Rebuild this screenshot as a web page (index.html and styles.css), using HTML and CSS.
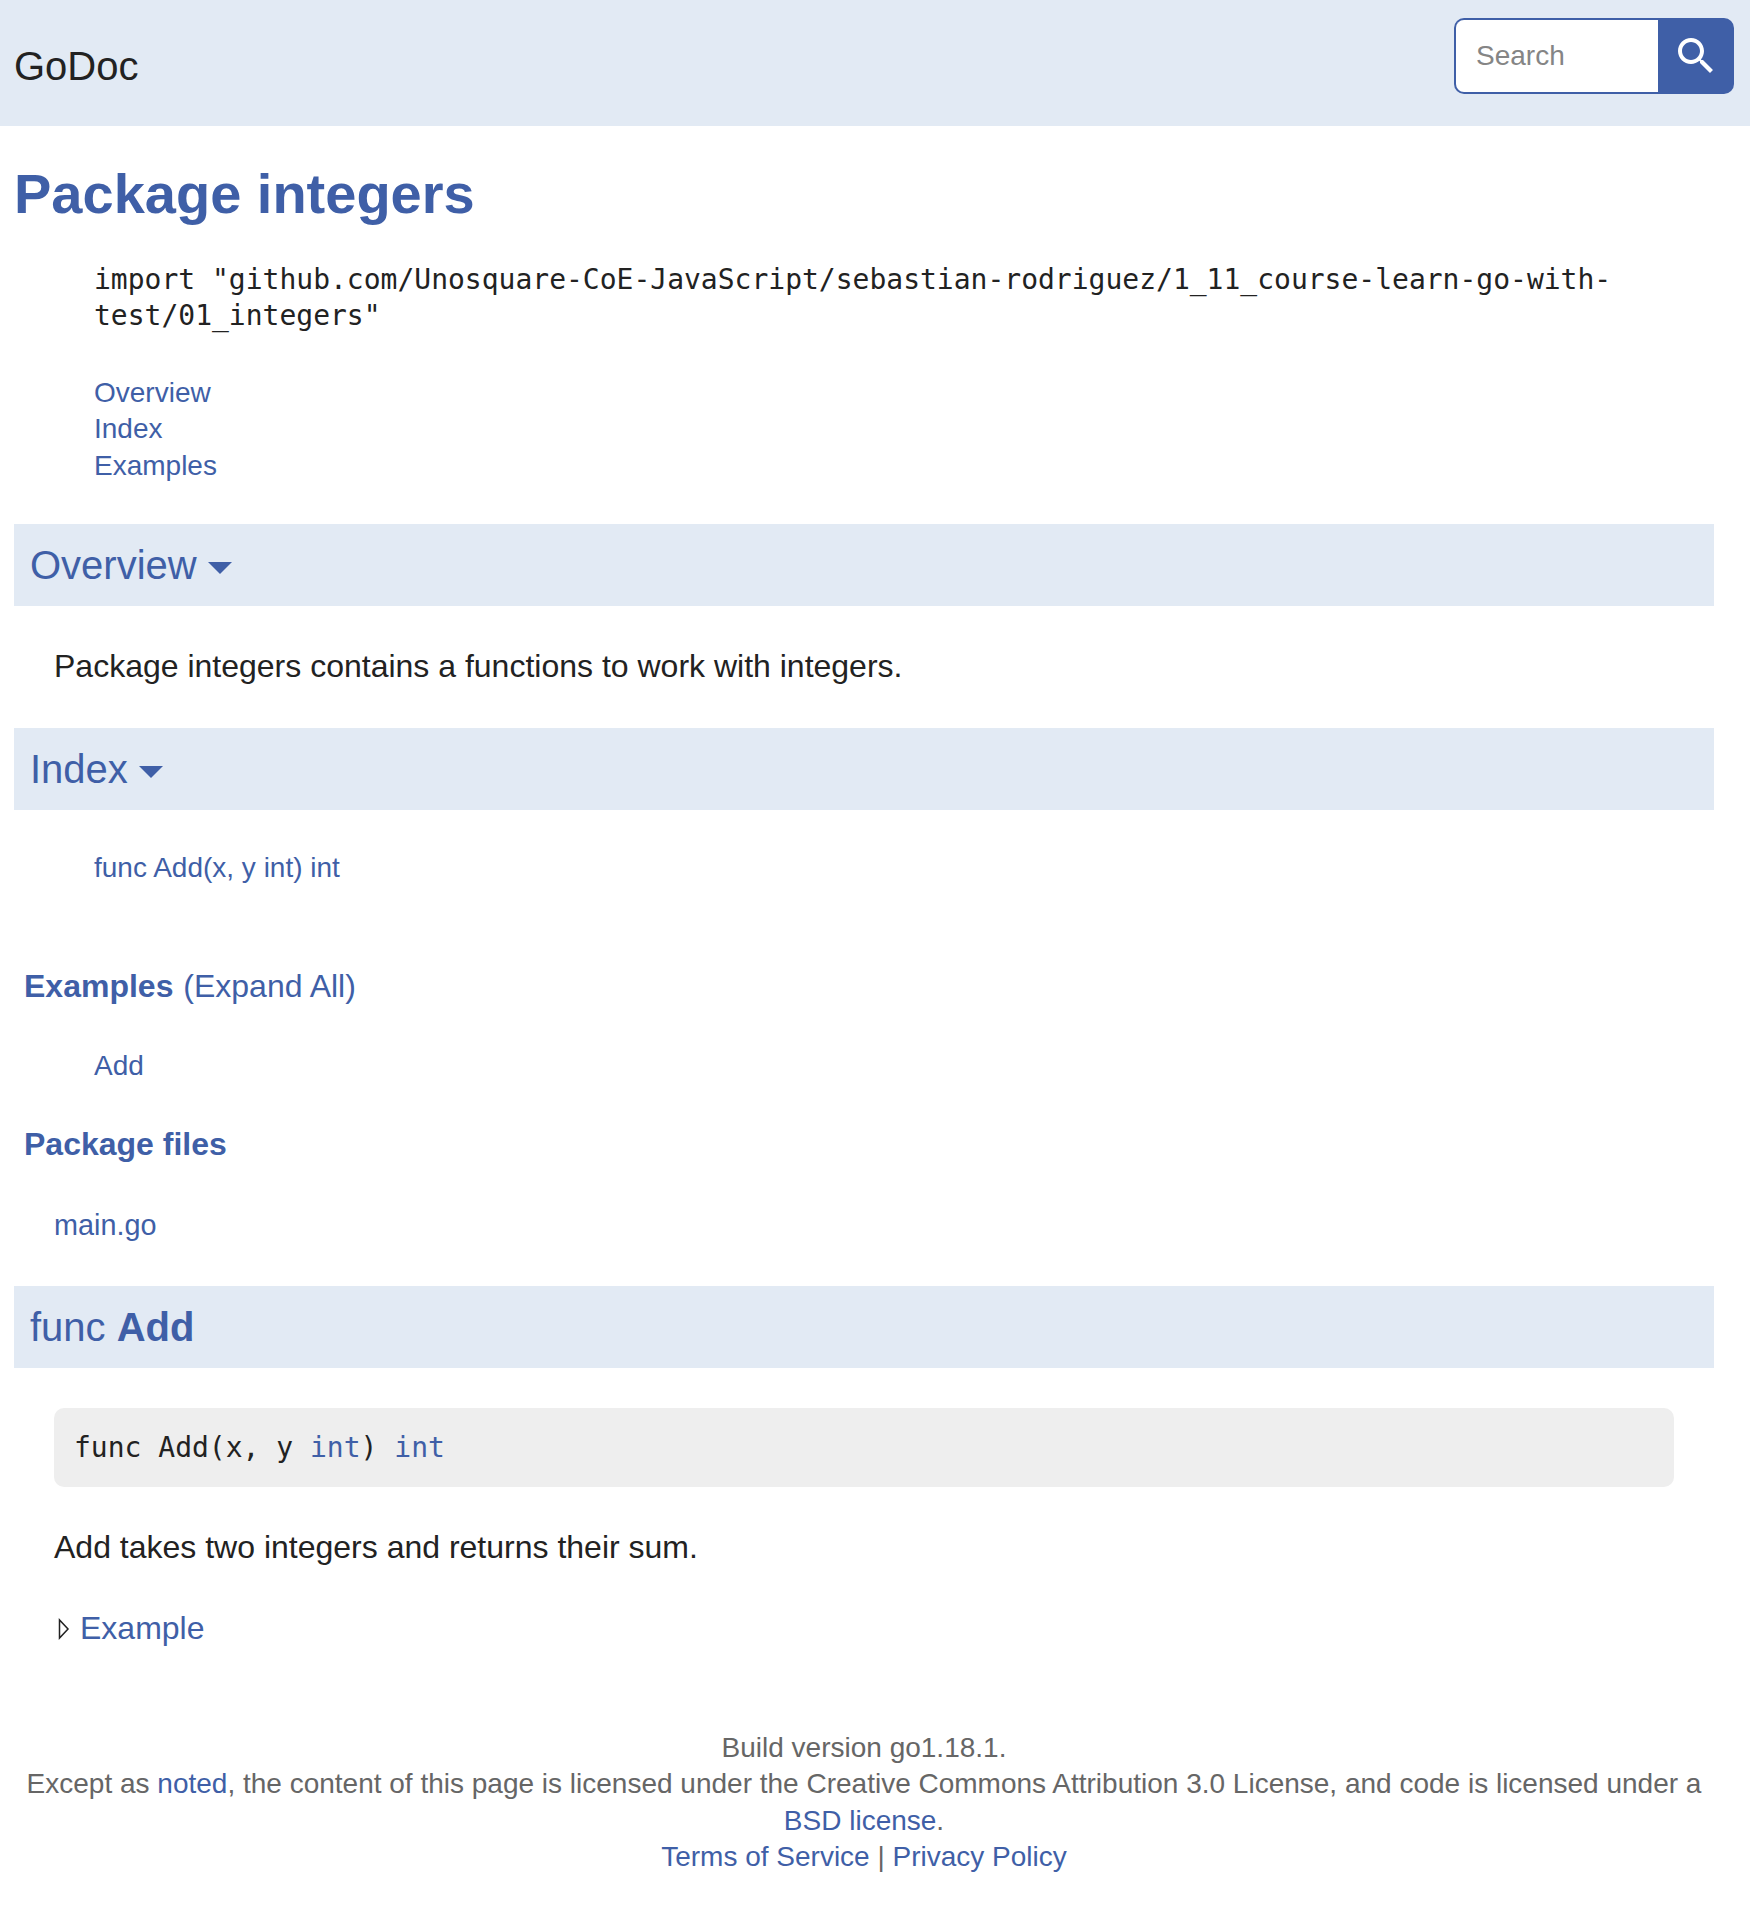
FILE: index.html
```html
<!DOCTYPE html>
<html lang="en">
<head>
<meta charset="utf-8">
<title>integers - GoDoc</title>
<link rel="stylesheet" href="styles.css">
</head>
<body>
<header class="topbar">
  <a class="brand" href="#">GoDoc</a>
  <form class="search">
    <input class="search-input" type="text" placeholder="Search" aria-label="Search">
    <button class="search-button" type="button" aria-label="Submit search">
      <svg class="search-icon" viewBox="0 0 24 24"><path d="M15.5 14h-.79l-.28-.27C15.41 12.59 16 11.11 16 9.5 16 5.91 13.09 3 9.5 3S3 5.91 3 9.5 5.91 16 9.5 16c1.61 0 3.09-.59 4.23-1.57l.27.28v.79l5 4.99L20.49 19l-4.99-5zm-6 0C7.01 14 5 11.99 5 9.5S7.01 5 9.5 5 14 7.01 14 9.5 11.99 14 9.5 14z"/></svg>
    </button>
  </form>
</header>
<main class="page">
  <h1 class="title">Package integers</h1>
  <p class="import"><code>import "github.com/Unosquare-CoE-JavaScript/sebastian-rodriguez/1_11_course-learn-go-with-test/01_integers"</code></p>
  <nav class="toc">
    <a href="#overview">Overview</a>
    <a href="#index">Index</a>
    <a href="#examples">Examples</a>
  </nav>

  <h2 class="bar" id="overview">Overview <svg class="caret" viewBox="0 0 24 12"><path d="M0 0h24L12 12z"/></svg></h2>
  <p class="text overview-text">Package integers contains a functions to work with integers.</p>

  <h2 class="bar" id="index">Index <svg class="caret" viewBox="0 0 24 12"><path d="M0 0h24L12 12z"/></svg></h2>
  <p class="entry index-entry"><a href="#Add">func Add(x, y int) int</a></p>
  <h3 class="sub" id="examples">Examples <a class="expand" href="#">(Expand All)</a></h3>
  <p class="entry example-entry"><a href="#example_Add">Add</a></p>
  <h3 class="sub">Package files</h3>
  <p class="files"><a href="#">main.go</a></p>

  <h2 class="bar" id="Add">func <a class="func-name" href="#">Add</a></h2>
  <pre class="code">func Add(x, y <a href="#">int</a>) <a href="#">int</a></pre>
  <p class="text func-text">Add takes two integers and returns their sum.</p>
  <p class="text example-toggle" id="example_Add"><svg class="arrow" viewBox="0 0 12 22"><path d="M1.5 2v18L10 11z"/></svg><a href="#">Example</a></p>

  <footer class="footer">
    Build version go1.18.1.<br>
    Except as <a href="#">noted</a>, the content of this page is licensed under the Creative Commons Attribution 3.0 License, and code is licensed under a <a href="#">BSD license</a>.<br>
    <a href="#">Terms of Service</a> | <a href="#">Privacy Policy</a>
  </footer>
</main>
</body>
</html>
```
FILE: styles.css
```css
* {
  box-sizing: border-box;
}

body {
  margin: 0;
  background: #fff;
  color: #222;
  font-family: "Liberation Sans", Arial, sans-serif;
  font-size: 32px;
  line-height: 41.6px;
}

h1, h2, h3, p, pre {
  margin: 0;
}

a {
  color: #3f5fa7;
  text-decoration: none;
}

.topbar {
  display: flex;
  justify-content: space-between;
  height: 126px;
  padding: 18px 16px 0 14px;
  background: #e2eaf4;
}

.brand {
  margin-top: 22px;
  color: #222;
  font-size: 40px;
  line-height: 52px;
}

.search {
  display: flex;
  width: 280px;
  height: 76px;
}

.search-input {
  width: 204px;
  margin: 0;
  padding: 0 0 1px 20px;
  border: 2px solid #3f5fa7;
  border-right: 0;
  border-radius: 10px 0 0 10px;
  background: #fff;
  font: 28px "Liberation Sans", Arial, sans-serif;
}

.search-input::placeholder {
  color: #858585;
}

.search-button {
  display: flex;
  align-items: center;
  justify-content: center;
  width: 76px;
  padding: 0;
  border: 0;
  border-radius: 0 10px 10px 0;
  background: #3f5fa7;
}

.search-icon {
  width: 48px;
  height: 48px;
  fill: #fff;
}

.page {
  padding: 33px 36px 0 14px;
}

.title {
  color: #3f5fa7;
  font-size: 56px;
  line-height: 70px;
}

.import {
  margin: 33px 80px 0;
  font-size: 28px;
  line-height: 36.4px;
}

.import code,
.code {
  font-family: "DejaVu Sans Mono", Menlo, monospace;
  font-size: 28px;
  line-height: 36.4px;
}

.import code {
  display: block;
}

.toc {
  display: flex;
  flex-direction: column;
  margin: 40.2px 0 39.8px 80px;
  font-size: 28px;
  line-height: 36.4px;
}

.bar {
  height: 82px;
  padding: 16px;
  background: #e2eaf4;
  color: #3f5fa7;
  font-size: 40px;
  font-weight: normal;
  line-height: 50px;
}

.caret {
  width: 24px;
  height: 12px;
  vertical-align: 5px;
  fill: #3f5fa7;
}

.func-name {
  font-weight: bold;
}

.text {
  margin-left: 40px;
}

.overview-text {
  margin-top: 40px;
  margin-bottom: 40.4px;
}

.entry {
  margin-left: 80px;
  font-size: 28px;
  line-height: 36.4px;
}

.index-entry {
  margin-top: 40px;
  margin-bottom: 79.6px;
}

.example-entry {
  margin-top: 40.4px;
  margin-bottom: 39.6px;
}

.sub {
  margin-left: 10px;
  color: #3f5fa7;
  font-size: 32px;
}

.expand {
  margin-left: 1px;
  font-weight: normal;
}

.files {
  margin: 41.4px 0 42.6px 40px;
  font-size: 28.8px;
  line-height: 36.4px;
}

.code {
  margin: 40px 40px 0;
  padding: 22px 20px 20.6px;
  border-radius: 10px;
  background: #eee;
}

.func-text {
  margin-top: 40px;
}

.example-toggle {
  display: flex;
  align-items: center;
  gap: 10px;
  margin-top: 39.4px;
  padding-left: 4px;
}

.arrow {
  width: 12px;
  height: 22px;
  fill: none;
  stroke: #222;
  stroke-width: 1.5;
}

.footer {
  margin-top: 80.4px;
  color: #666;
  font-size: 28px;
  line-height: 36.4px;
  text-align: center;
}
```
